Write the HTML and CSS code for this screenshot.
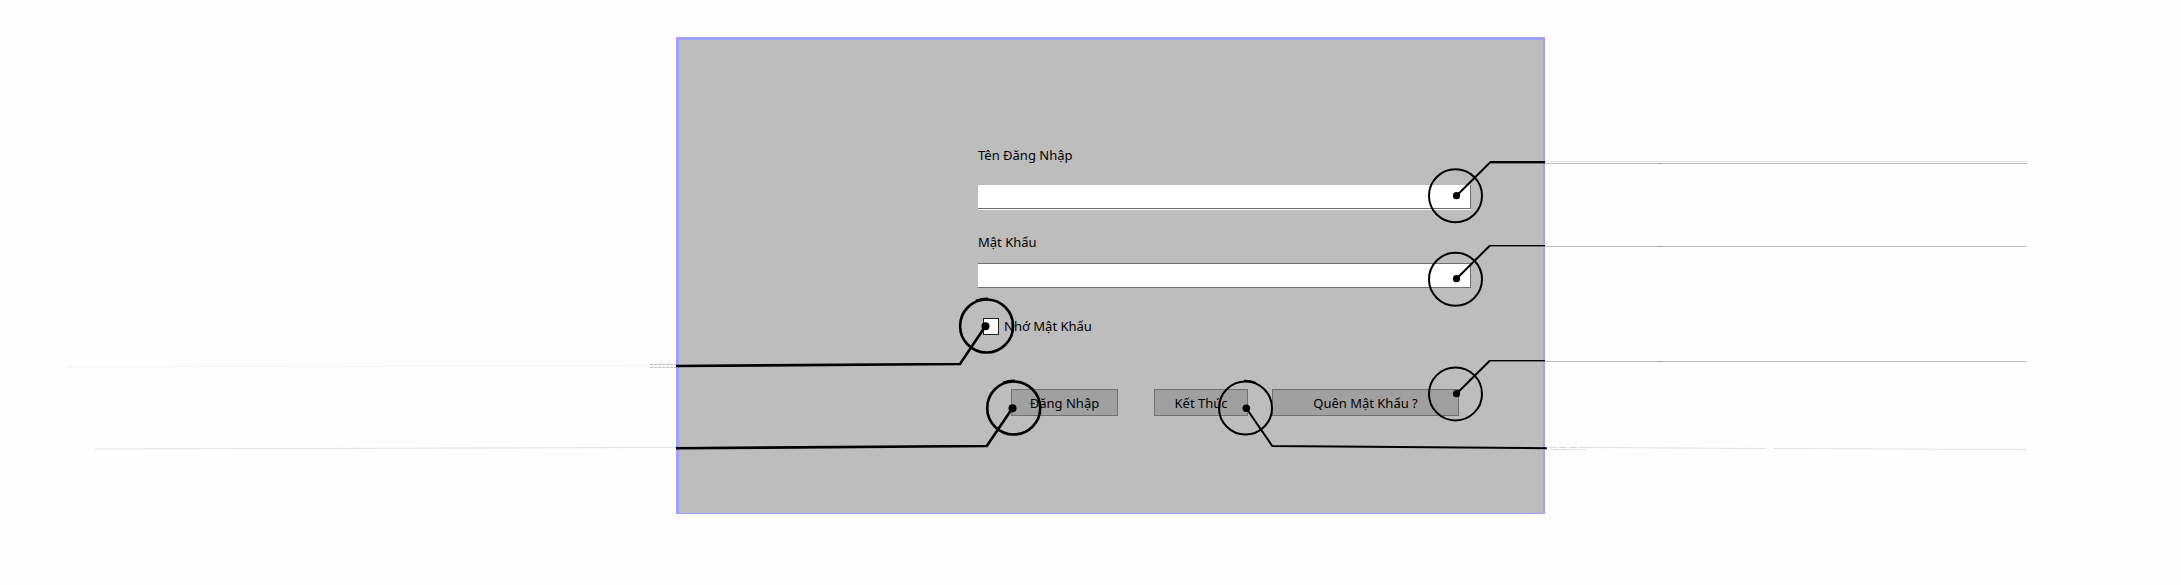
FILE: index.html
```html
<!DOCTYPE html>
<html lang="vi">
<head>
<meta charset="utf-8">
<title>Đăng Nhập</title>
<link rel="stylesheet" href="styles.css">
</head>
<body>
<main class="stage">
  <section class="panel">
    <form class="login">
      <label class="caption" for="user">Tên Đăng Nhập</label>
      <input class="field field-user" id="user" type="text">
      <label class="caption" for="pass">Mật Khẩu</label>
      <input class="field field-pass" id="pass" type="password">
      <div class="remember">
        <input class="tick" id="remember" type="checkbox">
        <label for="remember">Nhớ Mật Khẩu</label>
      </div>
      <div class="actions">
        <button class="action" type="submit">Đăng Nhập</button>
        <button class="action" type="button">Kết Thúc</button>
        <button class="action" type="button">Quên Mật Khẩu ?</button>
      </div>
    </form>
    <svg class="callouts" viewBox="676 37 869 477" fill="none" stroke="#000" aria-hidden="true">
      <!-- faint leader tails outside the panel -->
      <g stroke="#c0c0c0">
        <path d="M1545 161.500H2027" stroke="#e6e6e6"/>
        <path d="M1545 163.500H2027M1545 246.500H2027M1545 361.500H2027"/>
        <path d="M1658 163.500h4M1658 246.500h4M1658 361.500h4" stroke="#a0a0a0"/>
        <path d="M67 367L650 365.500H676" stroke="#f3f3f3"/>
        <path d="M650 364.500H676M650 367.500H676" stroke-dasharray="3 1"/>
        <path d="M95 449L676 447.500M1586 447.500L1766 448.500M1774 448.500L2027 449.500" stroke="#e2e2e2"/>
        <path d="M1549 447.500H1586M1551 449.500H1586" stroke="#dcdcdc" stroke-dasharray="8 2"/>
      </g>
      <!-- right-hand callouts -->
      <g stroke-width="2">
        <circle cx="1455.500" cy="195.700" r="26.500"/>
        <path d="M1456.500 195.700L1490.500 162H1545"/>
        <circle cx="1455.500" cy="279.200" r="26.500"/>
        <path d="M1456.500 278.700L1490 245.500"/>
        <circle cx="1455.500" cy="393.900" r="26.500"/>
        <path d="M1456.500 393.700L1490 360.500"/>
        <path d="M1489.500 245.500H1545M1489.500 360.500H1545" stroke-width="1"/>
        <path d="M1490 163.500H1545M1490 246.500H1545M1490 361.500H1545" stroke="#70746c" stroke-width="1"/>
      </g>
      <!-- lower callouts -->
      <g stroke-width="2.600">
        <circle cx="986.600" cy="326" r="26.500"/>
        <path d="M976 301Q982 298.600 988 298.800M985.500 326L960 364L676 366"/>
        <circle cx="1013.700" cy="408" r="26.500"/>
        <path d="M1003 383Q1009 380.600 1015 380.800M1012.500 408L986.800 446L676 448.300"/>
        <circle cx="1245.500" cy="408" r="26.500" stroke-width="2"/>
        <path d="M1244 380.800Q1250 380.600 1256 383M1246.300 408.300L1272.300 446L1547 448.300" stroke-width="2"/>
      </g>
      <g fill="#000" stroke="none">
        <circle cx="1456.500" cy="195.700" r="3.600"/>
        <circle cx="1456.500" cy="278.700" r="3.600"/>
        <circle cx="1456.500" cy="393.700" r="3.600"/>
        <circle cx="985.500" cy="326.200" r="4"/>
        <circle cx="1012.500" cy="408.200" r="4"/>
        <circle cx="1246.300" cy="408.200" r="3.800"/>
      </g>
    </svg>
  </section>
</main>
</body>
</html>
```
FILE: styles.css
```css
* {
  box-sizing: border-box;
}

body {
  margin: 0;
  background: #fefefe;
  color: #000;
  font: 13px/20px "Noto Sans", "DejaVu Sans", sans-serif;
}

.stage {
  display: grid;
  grid-template-columns: 676fr 869fr 636fr;
  padding: 37px 0;
  overflow: hidden;
}

.panel {
  grid-column: 2;
  position: relative;
  padding: 105px 72px 97px 299px;
  border: solid #a0a0ff;
  border-width: 3px 2px 1px 3px;
  background: #bdbdbd;
}

.login {
  display: flex;
  flex-direction: column;
}

.field {
  width: 100%;
  height: 25px;
  margin: 0;
  padding: 0 4px;
  border: 0 solid #6e6e6e;
  border-radius: 0;
  background: #fff;
  font: inherit;
}

.field-user {
  height: 24px;
  margin: 20px 0 23px;
  border-width: 0 1px 1px 0;
  box-shadow: 0 1px #fff;
}

.field-pass {
  margin-top: 11px;
  border-width: 1px 1px 1px 0;
}

.remember {
  display: flex;
  align-items: center;
  gap: 5px;
  margin: 28px 0 53px 5px;
}

.tick {
  appearance: none;
  width: 16px;
  height: 17px;
  margin: 0;
  border: 1px solid #222;
  background: #fff;
}

.tick:checked {
  background: #444;
}

.actions {
  display: grid;
  grid-template-columns: 107fr 36fr 94fr 24fr 187fr;
  padding: 0 12px 0 33px;
}

.action {
  height: 27px;
  padding: 0;
  border: 1px solid #707070;
  border-radius: 0;
  background: #a0a0a0;
  color: inherit;
  font: inherit;
  white-space: nowrap;
}

.action:nth-child(2) {
  grid-column: 3;
}

.action:nth-child(3) {
  grid-column: 5;
}

.callouts {
  position: absolute;
  top: -3px;
  left: -3px;
  width: calc(100% + 5px);
  height: auto;
  overflow: visible;
  pointer-events: none;
}
```
